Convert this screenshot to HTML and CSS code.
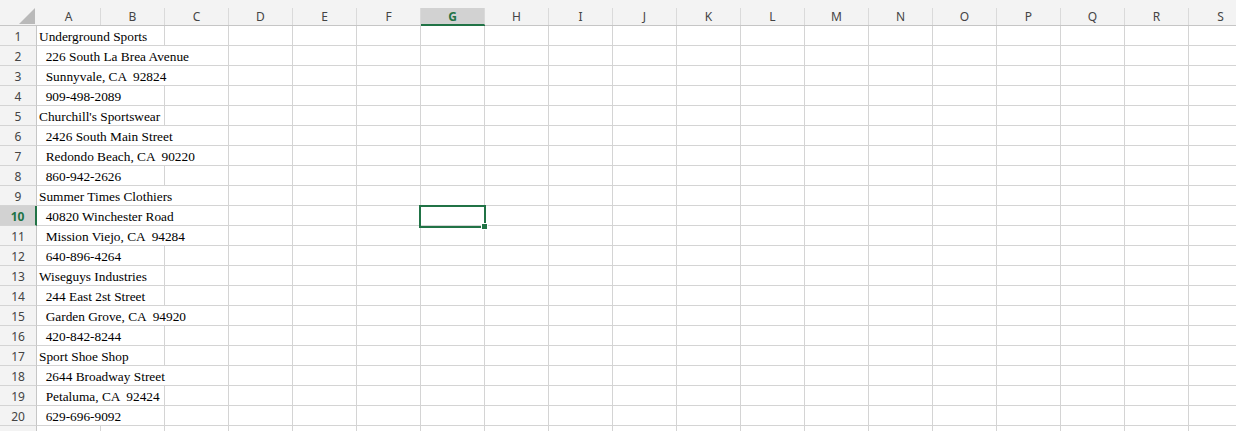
FILE: index.html
```html
<!DOCTYPE html>
<html>
<head>
<meta charset="utf-8">
<link rel="stylesheet" href="styles.css">
</head>
<body>
<div class="sheet">
  <div class="corner"><svg class="tri" width="16" height="16" viewBox="0 0 16 16"><polygon points="16,0 16,16 0,16" fill="#b9b9b9"/></svg></div>
  <div class="ch"><span class="hc">A</span></div>
  <div class="ch"><span class="hc">B</span></div>
  <div class="ch"><span class="hc">C</span></div>
  <div class="ch"><span class="hc">D</span></div>
  <div class="ch"><span class="hc">E</span></div>
  <div class="ch"><span class="hc">F</span></div>
  <div class="ch on"><span class="hc">G</span></div>
  <div class="ch"><span class="hc">H</span></div>
  <div class="ch"><span class="hc">I</span></div>
  <div class="ch"><span class="hc">J</span></div>
  <div class="ch"><span class="hc">K</span></div>
  <div class="ch"><span class="hc">L</span></div>
  <div class="ch"><span class="hc">M</span></div>
  <div class="ch"><span class="hc">N</span></div>
  <div class="ch"><span class="hc">O</span></div>
  <div class="ch"><span class="hc">P</span></div>
  <div class="ch"><span class="hc">Q</span></div>
  <div class="ch"><span class="hc">R</span></div>
  <div class="ch"><span class="hc">S</span></div>

  <div class="rh">1</div><div class="c t s2">Underground Sports</div><i class="c"></i><i class="c"></i><i class="c"></i><i class="c"></i><i class="c"></i><i class="c"></i><i class="c"></i><i class="c"></i><i class="c"></i><i class="c"></i><i class="c"></i><i class="c"></i><i class="c"></i><i class="c"></i><i class="c"></i><i class="c"></i><i class="c"></i>
  <div class="rh">2</div><div class="c t s3">  226 South La Brea Avenue</div><i class="c"></i><i class="c"></i><i class="c"></i><i class="c"></i><i class="c"></i><i class="c"></i><i class="c"></i><i class="c"></i><i class="c"></i><i class="c"></i><i class="c"></i><i class="c"></i><i class="c"></i><i class="c"></i><i class="c"></i><i class="c"></i>
  <div class="rh">3</div><div class="c t s3">  Sunnyvale, CA  92824</div><i class="c"></i><i class="c"></i><i class="c"></i><i class="c"></i><i class="c"></i><i class="c"></i><i class="c"></i><i class="c"></i><i class="c"></i><i class="c"></i><i class="c"></i><i class="c"></i><i class="c"></i><i class="c"></i><i class="c"></i><i class="c"></i>
  <div class="rh">4</div><div class="c t s2">  909-498-2089</div><i class="c"></i><i class="c"></i><i class="c"></i><i class="c"></i><i class="c"></i><i class="c"></i><i class="c"></i><i class="c"></i><i class="c"></i><i class="c"></i><i class="c"></i><i class="c"></i><i class="c"></i><i class="c"></i><i class="c"></i><i class="c"></i><i class="c"></i>
  <div class="rh">5</div><div class="c t s2">Churchill's Sportswear</div><i class="c"></i><i class="c"></i><i class="c"></i><i class="c"></i><i class="c"></i><i class="c"></i><i class="c"></i><i class="c"></i><i class="c"></i><i class="c"></i><i class="c"></i><i class="c"></i><i class="c"></i><i class="c"></i><i class="c"></i><i class="c"></i><i class="c"></i>
  <div class="rh">6</div><div class="c t s3">  2426 South Main Street</div><i class="c"></i><i class="c"></i><i class="c"></i><i class="c"></i><i class="c"></i><i class="c"></i><i class="c"></i><i class="c"></i><i class="c"></i><i class="c"></i><i class="c"></i><i class="c"></i><i class="c"></i><i class="c"></i><i class="c"></i><i class="c"></i>
  <div class="rh">7</div><div class="c t s3">  Redondo Beach, CA  90220</div><i class="c"></i><i class="c"></i><i class="c"></i><i class="c"></i><i class="c"></i><i class="c"></i><i class="c"></i><i class="c"></i><i class="c"></i><i class="c"></i><i class="c"></i><i class="c"></i><i class="c"></i><i class="c"></i><i class="c"></i><i class="c"></i>
  <div class="rh">8</div><div class="c t s2">  860-942-2626</div><i class="c"></i><i class="c"></i><i class="c"></i><i class="c"></i><i class="c"></i><i class="c"></i><i class="c"></i><i class="c"></i><i class="c"></i><i class="c"></i><i class="c"></i><i class="c"></i><i class="c"></i><i class="c"></i><i class="c"></i><i class="c"></i><i class="c"></i>
  <div class="rh">9</div><div class="c t s3">Summer Times Clothiers</div><i class="c"></i><i class="c"></i><i class="c"></i><i class="c"></i><i class="c"></i><i class="c"></i><i class="c"></i><i class="c"></i><i class="c"></i><i class="c"></i><i class="c"></i><i class="c"></i><i class="c"></i><i class="c"></i><i class="c"></i><i class="c"></i>
  <div class="rh on">10</div><div class="c t s3">  40820 Winchester Road</div><i class="c"></i><i class="c"></i><i class="c"></i><i class="c"></i><i class="c"></i><i class="c"></i><i class="c"></i><i class="c"></i><i class="c"></i><i class="c"></i><i class="c"></i><i class="c"></i><i class="c"></i><i class="c"></i><i class="c"></i><i class="c"></i>
  <div class="rh">11</div><div class="c t s3">  Mission Viejo, CA  94284</div><i class="c"></i><i class="c"></i><i class="c"></i><i class="c"></i><i class="c"></i><i class="c"></i><i class="c"></i><i class="c"></i><i class="c"></i><i class="c"></i><i class="c"></i><i class="c"></i><i class="c"></i><i class="c"></i><i class="c"></i><i class="c"></i>
  <div class="rh">12</div><div class="c t s2">  640-896-4264</div><i class="c"></i><i class="c"></i><i class="c"></i><i class="c"></i><i class="c"></i><i class="c"></i><i class="c"></i><i class="c"></i><i class="c"></i><i class="c"></i><i class="c"></i><i class="c"></i><i class="c"></i><i class="c"></i><i class="c"></i><i class="c"></i><i class="c"></i>
  <div class="rh">13</div><div class="c t s2">Wiseguys Industries</div><i class="c"></i><i class="c"></i><i class="c"></i><i class="c"></i><i class="c"></i><i class="c"></i><i class="c"></i><i class="c"></i><i class="c"></i><i class="c"></i><i class="c"></i><i class="c"></i><i class="c"></i><i class="c"></i><i class="c"></i><i class="c"></i><i class="c"></i>
  <div class="rh">14</div><div class="c t s2">  244 East 2st Street</div><i class="c"></i><i class="c"></i><i class="c"></i><i class="c"></i><i class="c"></i><i class="c"></i><i class="c"></i><i class="c"></i><i class="c"></i><i class="c"></i><i class="c"></i><i class="c"></i><i class="c"></i><i class="c"></i><i class="c"></i><i class="c"></i><i class="c"></i>
  <div class="rh">15</div><div class="c t s3">  Garden Grove, CA  94920</div><i class="c"></i><i class="c"></i><i class="c"></i><i class="c"></i><i class="c"></i><i class="c"></i><i class="c"></i><i class="c"></i><i class="c"></i><i class="c"></i><i class="c"></i><i class="c"></i><i class="c"></i><i class="c"></i><i class="c"></i><i class="c"></i>
  <div class="rh">16</div><div class="c t s2">  420-842-8244</div><i class="c"></i><i class="c"></i><i class="c"></i><i class="c"></i><i class="c"></i><i class="c"></i><i class="c"></i><i class="c"></i><i class="c"></i><i class="c"></i><i class="c"></i><i class="c"></i><i class="c"></i><i class="c"></i><i class="c"></i><i class="c"></i><i class="c"></i>
  <div class="rh">17</div><div class="c t s2">Sport Shoe Shop</div><i class="c"></i><i class="c"></i><i class="c"></i><i class="c"></i><i class="c"></i><i class="c"></i><i class="c"></i><i class="c"></i><i class="c"></i><i class="c"></i><i class="c"></i><i class="c"></i><i class="c"></i><i class="c"></i><i class="c"></i><i class="c"></i><i class="c"></i>
  <div class="rh">18</div><div class="c t s3">  2644 Broadway Street</div><i class="c"></i><i class="c"></i><i class="c"></i><i class="c"></i><i class="c"></i><i class="c"></i><i class="c"></i><i class="c"></i><i class="c"></i><i class="c"></i><i class="c"></i><i class="c"></i><i class="c"></i><i class="c"></i><i class="c"></i><i class="c"></i>
  <div class="rh">19</div><div class="c t s2">  Petaluma, CA  92424</div><i class="c"></i><i class="c"></i><i class="c"></i><i class="c"></i><i class="c"></i><i class="c"></i><i class="c"></i><i class="c"></i><i class="c"></i><i class="c"></i><i class="c"></i><i class="c"></i><i class="c"></i><i class="c"></i><i class="c"></i><i class="c"></i><i class="c"></i>
  <div class="rh">20</div><div class="c t s2">  629-696-9092</div><i class="c"></i><i class="c"></i><i class="c"></i><i class="c"></i><i class="c"></i><i class="c"></i><i class="c"></i><i class="c"></i><i class="c"></i><i class="c"></i><i class="c"></i><i class="c"></i><i class="c"></i><i class="c"></i><i class="c"></i><i class="c"></i><i class="c"></i>
  <div class="rh"></div><i class="c"></i><i class="c"></i><i class="c"></i><i class="c"></i><i class="c"></i><i class="c"></i><i class="c"></i><i class="c"></i><i class="c"></i><i class="c"></i><i class="c"></i><i class="c"></i><i class="c"></i><i class="c"></i><i class="c"></i><i class="c"></i><i class="c"></i><i class="c"></i><i class="c"></i>

  <div class="sel"><span class="handle"></span></div>
</div>
</body>
</html>
```
FILE: styles.css
```css
html, body {
  margin: 0;
  height: 100%;
  overflow: hidden;
  background: #fff;
}
.sheet {
  position: relative;
  display: grid;
  grid-template-columns: 37px repeat(19, 64px);
  grid-template-rows: 26px repeat(21, 20px);
  width: max-content;
}
.corner {
  box-sizing: border-box;
  background: #f3f3f3;
  border-bottom: 1px solid #c6c6c6;
  display: flex;
  align-items: flex-end;
  justify-content: flex-end;
  padding: 0 2px 1px 0;
}
.tri { display: block; }
.ch {
  box-sizing: border-box;
  background: #f3f3f3;
  border-bottom: 1px solid #c6c6c6;
  padding-top: 8px;
}
.hc {
  display: block;
  box-sizing: border-box;
  height: 17px;
  border-right: 1px solid #dadada;
  text-align: center;
  font: 12px/17px "Noto Sans", "DejaVu Sans", sans-serif;
  color: #444;
}
.ch.on { border-bottom-color: #217346; }
.ch.on .hc {
  background: #d2d2d2;
  border-bottom: 1px solid #217346;
  color: #217346;
  font-weight: 700;
}
.rh {
  box-sizing: border-box;
  background: #f3f3f3;
  border-right: 1px solid #c6c6c6;
  border-bottom: 1px solid #d4d4d4;
  padding-top: 1px;
  text-align: center;
  font: 12px/20px "Noto Sans", "DejaVu Sans", sans-serif;
  color: #444;
}
.rh.on {
  background: #d2d2d2;
  border-right: 2px solid #217346;
  color: #217346;
  font-weight: 700;
}
.c {
  display: block;
  box-sizing: border-box;
  border-right: 1px solid #d4d4d4;
  border-bottom: 1px solid #d4d4d4;
}
.t {
  white-space: pre;
  font: 13.33px/20px "Liberation Serif", "Times New Roman", serif;
  padding-left: 2px;
  padding-top: 1px;
  color: #000;
}
.s2 { grid-column: span 2; }
.s3 { grid-column: span 3; }
.sel {
  position: absolute;
  left: 419px;
  top: 205px;
  width: 67px;
  height: 23px;
  box-sizing: border-box;
  border: 2px solid #217346;
}
.handle {
  position: absolute;
  right: -4px;
  bottom: -4px;
  width: 5px;
  height: 5px;
  background: #217346;
  border: 1px solid #fff;
}
```
